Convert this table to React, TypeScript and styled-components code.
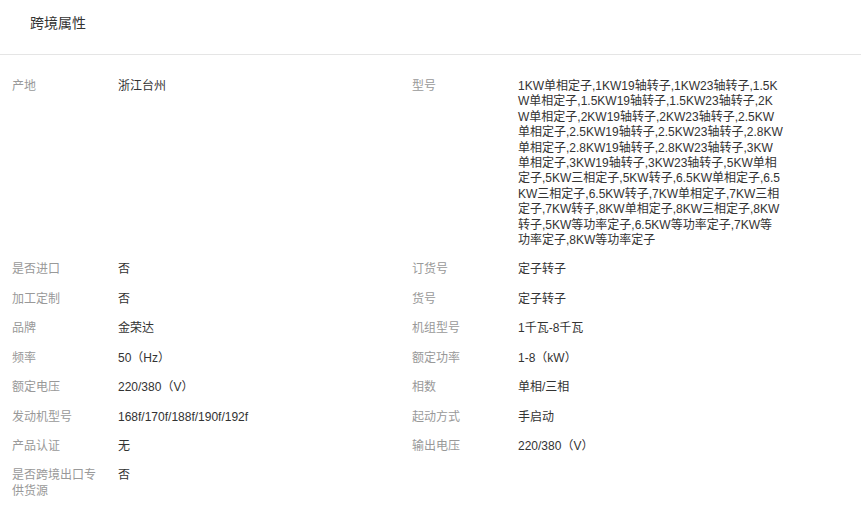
import styled, { createGlobalStyle } from 'styled-components';

const GlobalStyle = createGlobalStyle`
  body {
    margin: 0;
    background: #fff;
    font-family: 'Liberation Sans', 'Noto Sans CJK SC', sans-serif;
  }
`;

const ATTRS: [string, string][] = [
  ['产地', '浙江台州'],
  [
    '型号',
    '1KW单相定子,1KW19轴转子,1KW23轴转子,1.5KW单相定子,1.5KW19轴转子,1.5KW23轴转子,2KW单相定子,2KW19轴转子,2KW23轴转子,2.5KW单相定子,2.5KW19轴转子,2.5KW23轴转子,2.8KW单相定子,2.8KW19轴转子,2.8KW23轴转子,3KW单相定子,3KW19轴转子,3KW23轴转子,5KW单相定子,5KW三相定子,5KW转子,6.5KW单相定子,6.5KW三相定子,6.5KW转子,7KW单相定子,7KW三相定子,7KW转子,8KW单相定子,8KW三相定子,8KW转子,5KW等功率定子,6.5KW等功率定子,7KW等功率定子,8KW等功率定子',
  ],
  ['是否进口', '否'],
  ['订货号', '定子转子'],
  ['加工定制', '否'],
  ['货号', '定子转子'],
  ['品牌', '金荣达'],
  ['机组型号', '1千瓦-8千瓦'],
  ['频率', '50（Hz）'],
  ['额定功率', '1-8（kW）'],
  ['额定电压', '220/380（V）'],
  ['相数', '单相/三相'],
  ['发动机型号', '168f/170f/188f/190f/192f'],
  ['起动方式', '手启动'],
  ['产品认证', '无'],
  ['输出电压', '220/380（V）'],
  ['是否跨境出口专供货源', '否'],
];

const App = () => {
  return (
    <Wrapper>
      <GlobalStyle />
      <Header>跨境属性</Header>
      <AttrGrid>
        {ATTRS.map(([label, value]) => (
          <AttrItem key={label}>
            <AttrLabel>{label}</AttrLabel>
            <AttrValue>{value}</AttrValue>
          </AttrItem>
        ))}
      </AttrGrid>
    </Wrapper>
  );
};

const Wrapper = styled.div`
  width: 861px;
  background: #fff;
`;

const Header = styled.div`
  padding: 15px 30px 23px;
  font-size: 14px;
  line-height: 16px;
  color: #333;
  border-bottom: 1px solid #e5e5e5;
`;

const AttrGrid = styled.div`
  display: grid;
  grid-template-columns: 400px 400px;
  padding: 17px 0 0 12px;
`;

const AttrItem = styled.div`
  display: flex;
  padding: 7px 0;
  font-size: 12px;
  line-height: 15.4px;
`;

const AttrLabel = styled.div`
  width: 90px;
  padding-right: 16px;
  flex-shrink: 0;
  color: #999;
`;

const AttrValue = styled.div`
  width: 266px;
  color: #333;
  word-break: break-all;
`;

export default App;
